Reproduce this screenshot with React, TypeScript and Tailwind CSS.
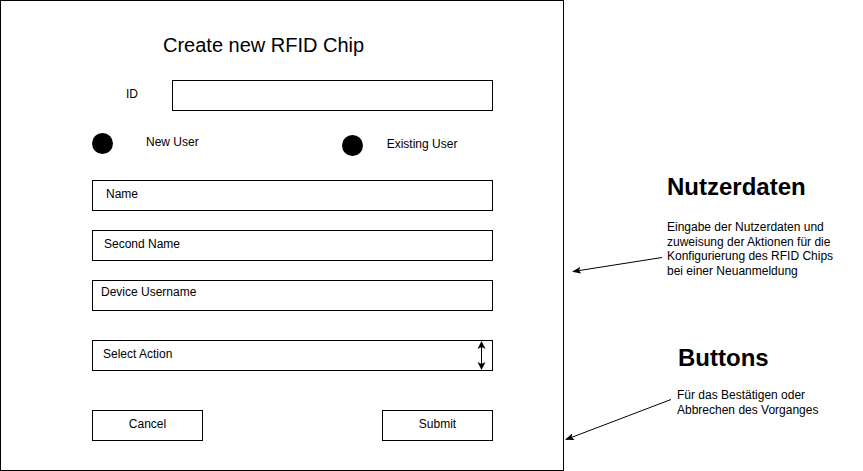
import React from "react";

const font = { fontFamily: '"Liberation Sans", Arial, sans-serif' };

const Field = ({ label, pad }: { label: string; pad: string }) => (
  <div className={`w-[401px] h-[31px] border border-black text-[12px] leading-[14px] ${pad}`}>
    {label}
  </div>
);

const Radio = () => <div className="w-[21px] h-[21px] rounded-full bg-black shrink-0" />;

const Arrow = ({ x1, y1, x2, y2 }: { x1: number; y1: number; x2: number; y2: number }) => (
  <line x1={x1} y1={y1} x2={x2} y2={y2} stroke="black" strokeWidth={1} markerEnd="url(#head)" />
);

export default function App() {
  return (
    <div className="relative w-[863px] h-[471px] bg-white text-black flex" style={font}>
      {/* the form */}
      <div className="w-[564px] h-[471px] border border-black shrink-0">
        <div className="ml-[162px] mt-[33px] text-[20px] leading-[23px]">Create new RFID Chip</div>

        <div className="flex items-start mt-[23px]">
          <span className="ml-[125px] mt-[7px] w-[46px] text-[12px] leading-[14px]">ID</span>
          <div className="w-[321px] h-[31px] border border-black" />
        </div>

        <div className="flex items-start h-[23px] mt-[22px] text-[12px] leading-[14px]">
          <div className="ml-[91px]">
            <Radio />
          </div>
          <span className="ml-[33px] mt-[2px]">New User</span>
          <div className="ml-[143px] mt-[2px]">
            <Radio />
          </div>
          <span className="ml-[24px] mt-[4px]">Existing User</span>
        </div>

        <div className="ml-[91px] mt-[24px] flex flex-col">
          <Field label="Name" pad="pl-[13px] pt-[6px]" />
          <div className="mt-[19px]">
            <Field label="Second Name" pad="pl-[11px] pt-[6px]" />
          </div>
          <div className="mt-[19px]">
            <Field label="Device Username" pad="pl-[8px] pt-[4px]" />
          </div>

          <div className="mt-[29px] w-[401px] h-[31px] border border-black flex justify-between text-[12px] leading-[14px]">
            <span className="pl-[10px] pt-[6px]">Select Action</span>
            <svg width="9" height="29" viewBox="0 0 9 29" className="mr-[6px]">
              <line x1="4.5" y1="3" x2="4.5" y2="26" stroke="black" strokeWidth="1" />
              <path d="M4.5 0 L8.5 8 L4.5 6 L0.5 8 Z" fill="black" />
              <path d="M4.5 29 L8.5 21 L4.5 23 L0.5 21 Z" fill="black" />
            </svg>
          </div>

          <div className="mt-[39px] flex justify-between w-[401px] text-[12px] leading-[14px]">
            <div className="w-[111px] h-[31px] border border-black pt-[6px] text-center">Cancel</div>
            <div className="w-[111px] h-[31px] border border-black pt-[6px] text-center">Submit</div>
          </div>
        </div>
      </div>

      {/* annotations */}
      <div className="flex flex-col">
        <div className="ml-[103px] mt-[173px] text-[24px] leading-[28px] font-bold">Nutzerdaten</div>
        <div className="ml-[103px] mt-[19px] text-[12px] leading-[14.5px]">
          Eingabe der Nutzerdaten und
          <br />
          zuweisung der Aktionen für die
          <br />
          Konfigurierung des RFID Chips
          <br />
          bei einer Neuanmeldung
        </div>
        <div className="ml-[114px] mt-[66px] text-[24px] leading-[28px] font-bold">Buttons</div>
        <div className="ml-[113px] mt-[16px] text-[12px] leading-[14.5px]">
          Für das Bestätigen oder
          <br />
          Abbrechen des Vorganges
        </div>
      </div>

      <svg className="absolute inset-0 pointer-events-none" width="863" height="471">
        <defs>
          <marker id="head" markerWidth="9" markerHeight="7" refX="8" refY="3.5" orient="auto" markerUnits="userSpaceOnUse">
            <path d="M0 0 L9 3.5 L0 7 L2 3.5 Z" fill="black" />
          </marker>
        </defs>
        <Arrow x1={662} y1={257.5} x2={573} y2={271.5} />
        <Arrow x1={671} y1={399.5} x2={566} y2={439.5} />
      </svg>
    </div>
  );
}
